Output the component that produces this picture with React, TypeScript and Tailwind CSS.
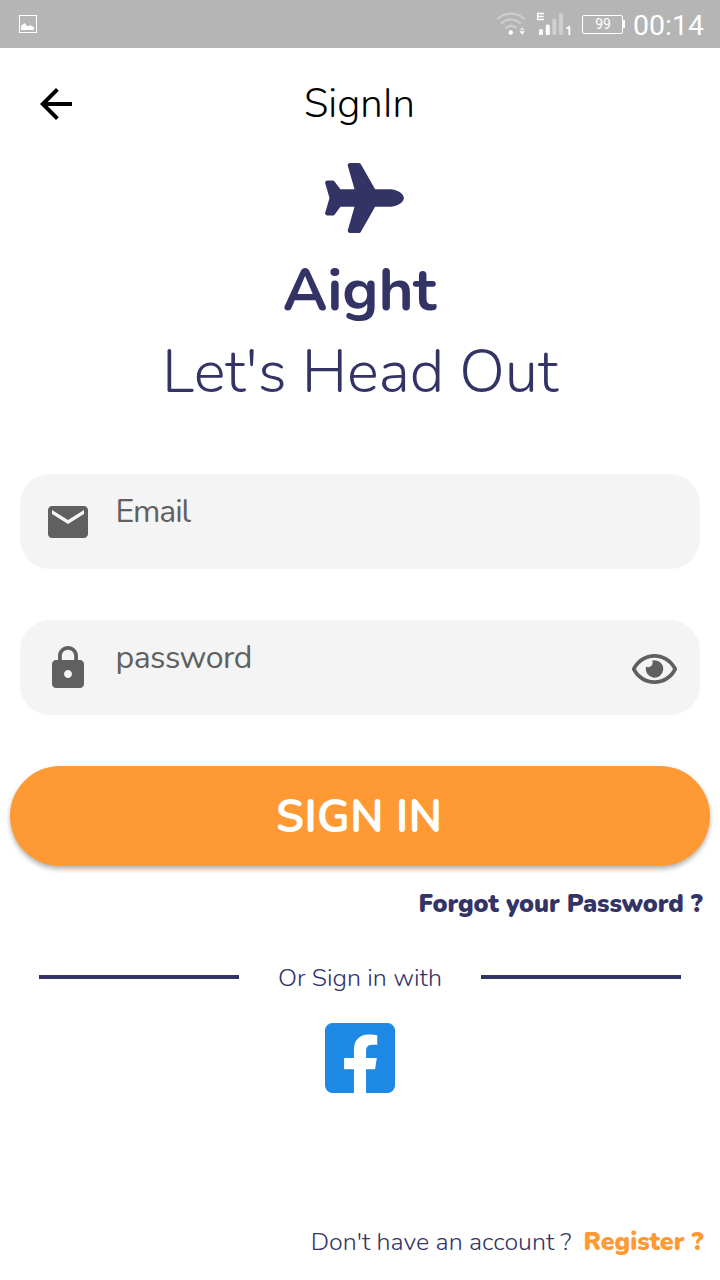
import type { ReactNode } from 'react';
import { FaFacebookSquare, FaPlane, FaRegEye } from 'react-icons/fa';
import { MdArrowBack, MdEmail, MdLock } from 'react-icons/md';

function StatusBar() {
  return (
    <div className="flex h-12 items-center bg-[#b5b5b5] pr-4 pl-[19px] text-white">
      <svg width="18" height="18" viewBox="0 0 18 18">
        <rect x="0.5" y="0.5" width="17" height="17" fill="none" stroke="white" />
        <path d="M2 15v-3.500q0.500-1.500 2-2l1-1.500 1.500 1 1.500 2h1.500q1.500-1.500 3-0.300l1.500 0.800q1 0.500 1 2V15z" fill="white" />
      </svg>
      <svg className="ml-auto" width="78" height="26" viewBox="0 0 78 26">
        <g fill="none" stroke="#cfcfcf" strokeWidth="2">
          <path d="M1.200 8Q15-3 28.800 8" />
          <path d="M5.200 12.500Q14.500 4.500 24.800 12.500" />
          <path d="M9.700 17.500Q15 12.500 20.500 17" />
        </g>
        <circle cx="14.800" cy="21.500" r="2.200" fill="white" />
        <path d="M23.500 19.200l2.700-3.500 2.700 3.500z" fill="#dedede" />
        <path d="M23.500 20.200h5.400L26.200 23.800z" fill="white" />
        <path d="M48 2.500H41.600V8.500H48M41.500 5.500H47.600" fill="none" stroke="white" strokeWidth="1.300" />
        <rect x="43" y="18" width="4" height="6" rx="1.500" fill="white" />
        <rect x="49.800" y="13.500" width="4" height="10.500" rx="1.500" fill="white" />
        <rect x="56.300" y="7.500" width="4" height="16.500" rx="1.500" fill="#cfcfcf" />
        <rect x="63" y="2" width="4" height="22" rx="1.500" fill="#cfcfcf" />
        <path d="M70.500 17.500L73.300 16V24" fill="none" stroke="white" strokeWidth="1.800" />
      </svg>
      <div className="ml-2 flex items-center">
        <div className="flex h-[19px] w-[41px] items-center justify-center rounded-[2px] border border-white pl-px font-[Roboto,sans-serif] text-[14px] leading-none">
          99
        </div>
        <div className="h-[8px] w-[2px] bg-white" />
      </div>
      <span className="ml-2 w-[71px] pt-1 font-[Roboto,sans-serif] text-[28.500px] leading-none whitespace-nowrap">00:14</span>
    </div>
  );
}

function Field({ icon, label, action }: { icon: ReactNode; label: ReactNode; action?: ReactNode }) {
  return (
    <div className="mx-5 flex h-[95px] items-center rounded-[30px] bg-[#f4f4f4] pr-[23px] pl-6 text-[#606060]">
      {icon}
      {label}
      {action}
    </div>
  );
}

export default function App() {
  return (
    <div className="flex h-[1280px] w-[720px] flex-col overflow-hidden bg-white font-[Nunito,sans-serif] text-[#333366]">
      <StatusBar />
      <header className="grid h-28 grid-cols-[1fr_auto_1fr] items-center px-8 text-black">
        <MdArrowBack size={48} />
        <h1 className="pr-px text-[40px] leading-[54px] font-light">SignIn</h1>
      </header>

      <div className="mt-[3px] flex flex-col items-center">
        <FaPlane className="ml-2 h-[70px] w-[79px]" />
        <div className="mt-[16px] pr-px text-[60px] leading-[82px] font-bold tracking-[-0.2px]">Aight</div>
        <div className="text-[60px] leading-[82px] font-light tracking-[-0.05px]">Let's Head Out</div>
      </div>

      <div className="mt-[61px] flex flex-col gap-[51px]">
        <Field
          icon={<MdEmail size={48} />}
          label={<span className="mb-5 ml-[23.500px] text-[32px] leading-10 font-[380] tracking-[-1.1px]">Email</span>}
        />
        <Field
          icon={<MdLock size={48} />}
          label={<span className="mb-5 ml-[23.500px] text-[32px] leading-10 font-[380] tracking-[-0.5px]">password</span>}
          action={<FaRegEye className="mt-[3px] ml-auto h-10 w-[45px]" />}
        />
      </div>

      <button className="mx-[10px] mt-[51px] h-[100px] rounded-full bg-[#ff9933] pt-[2px] pr-[2px] text-[45px] leading-none font-bold text-white shadow-[0_3px_5px_rgba(0,0,0,0.3)]">
        SIGN IN
      </button>
      <a className="mt-[21px] mr-[17.500px] self-end text-[25px] leading-[34px] font-black tracking-[-0.1px]">Forgot your Password ?</a>

      <div className="mt-[39px] flex items-center justify-between px-[39px]">
        <div className="mb-px h-1 w-[200px] bg-[#333366]" />
        <span className="pt-px text-[25px] leading-[34px] font-light">Or Sign in with</span>
        <div className="mb-px h-1 w-[200px] bg-[#333366]" />
      </div>
      <FaFacebookSquare className="mt-[23px] h-20 w-[70px] self-center text-[#1e88e5]" />

      <div className="mt-auto mr-[16.500px] mb-[21px] flex gap-3 self-end text-[25px] leading-[34px] whitespace-nowrap">
        <span className="font-light">Don't have an account ?</span>
        <a className="font-black tracking-[-0.05px] text-[#ff9933]">Register ?</a>
      </div>
    </div>
  );
}
